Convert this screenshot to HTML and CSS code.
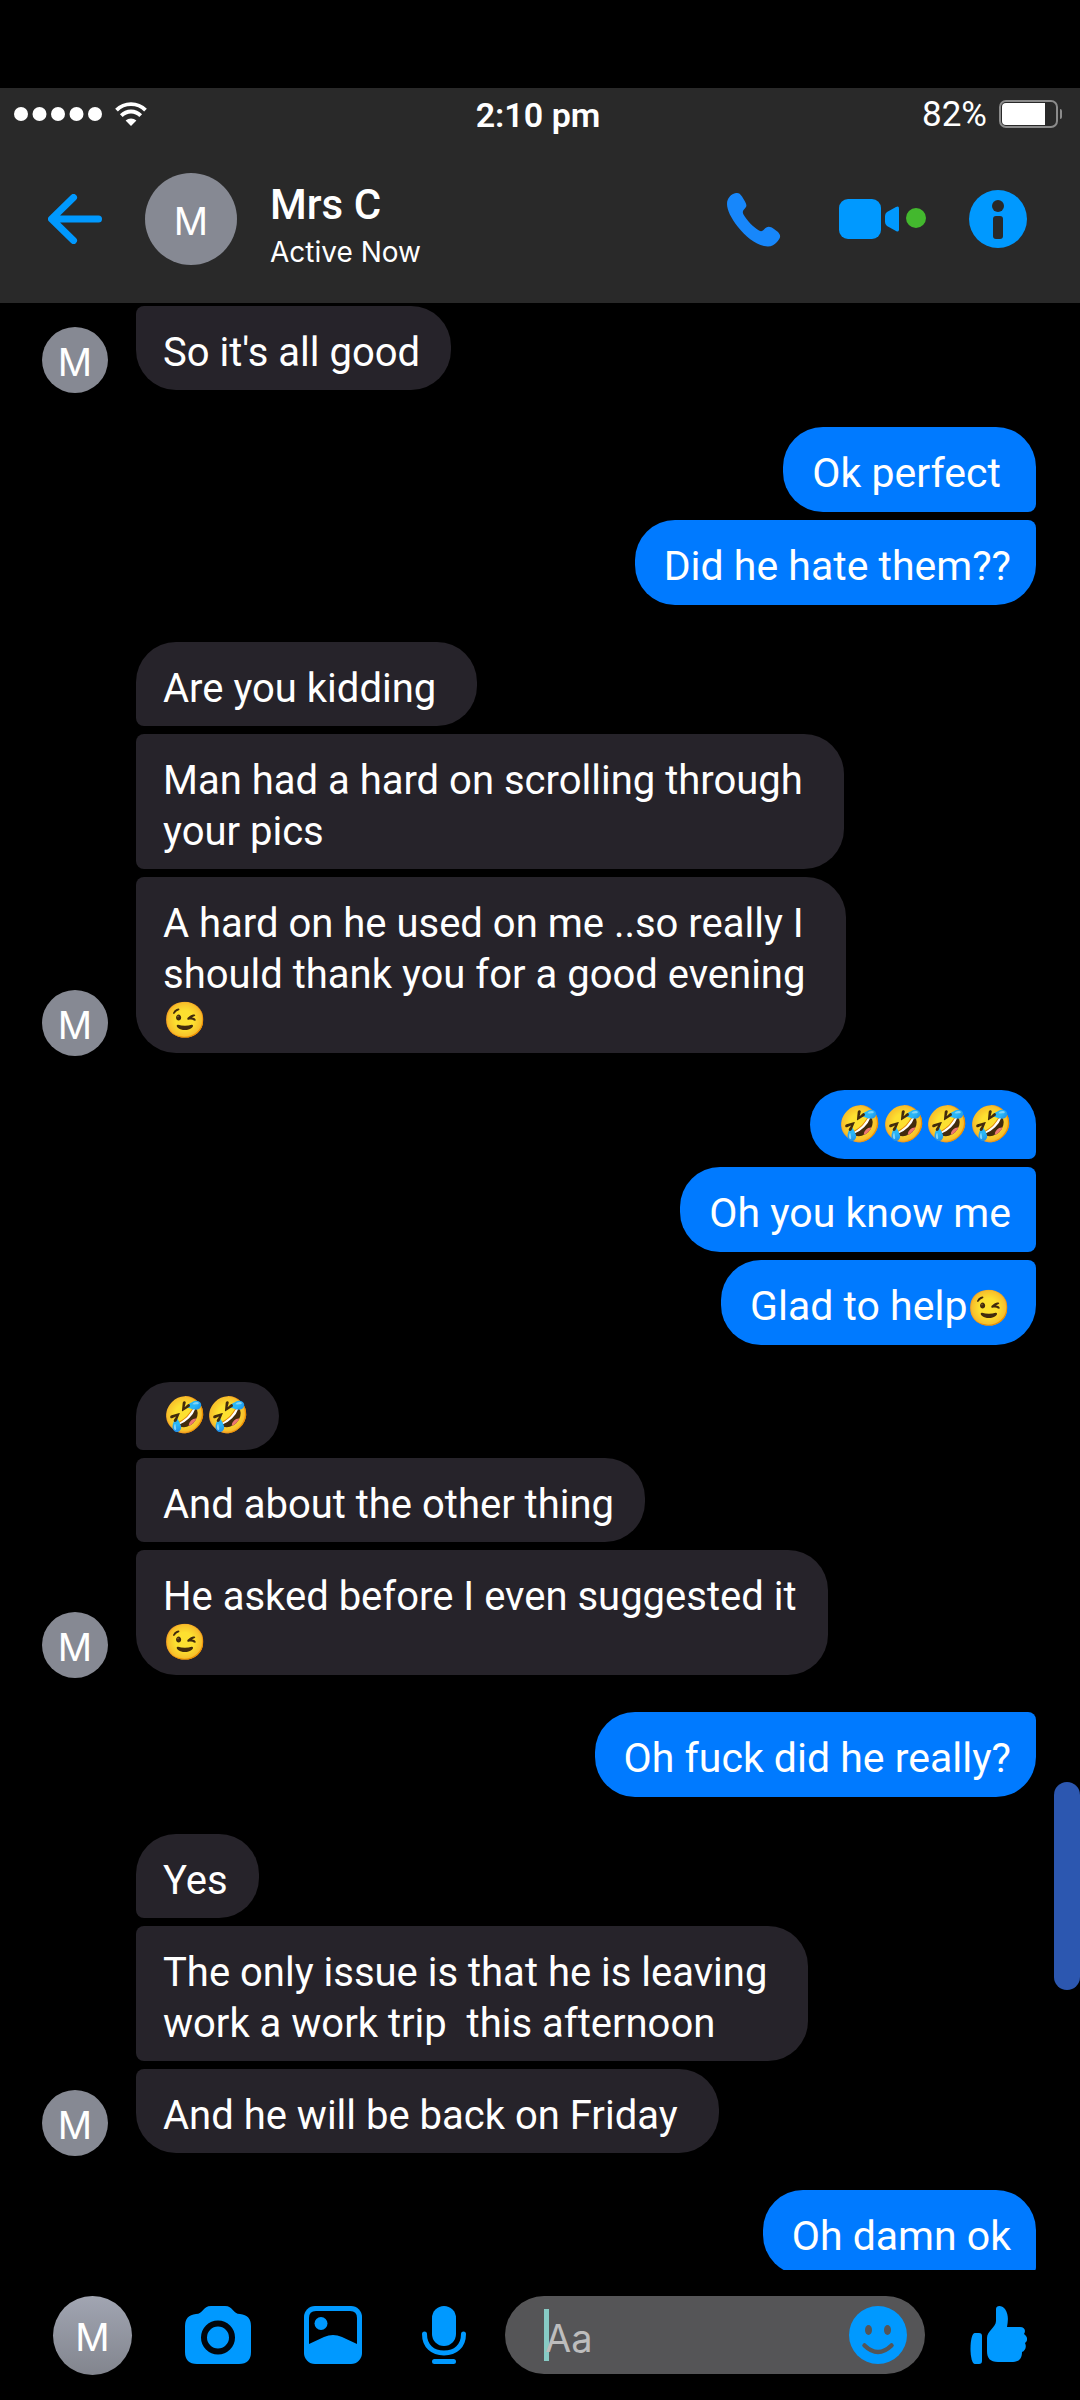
FILE: index.html
```html
<!DOCTYPE html>
<html lang="en">
<head>
<meta charset="utf-8">
<meta name="viewport" content="width=device-width, initial-scale=1">
<title>Mrs C</title>
<link rel="stylesheet" href="styles.css">
</head>
<body>
<div class="app">
  <header class="top">
    <div class="status">
      <div class="status-left">
        <svg width="88" height="14" viewBox="0 0 88 14" fill="#fff" aria-label="Signal"><circle cx="7" cy="7" r="7"/><circle cx="25.500" cy="7" r="7"/><circle cx="44" cy="7" r="7"/><circle cx="62.500" cy="7" r="7"/><circle cx="81" cy="7" r="7"/></svg>
        <svg width="32" height="24" viewBox="0 0 32 24" fill="none" stroke="#fff" stroke-width="3.800" aria-label="Wi-Fi"><path d="M1.500 8.200a20.500 20.500 0 0 1 29 0"/><path d="M6.300 13.600a13.500 13.500 0 0 1 19.400 0"/><path d="M16 24l-5.400-5.400a8 8 0 0 1 10.800 0z" fill="#fff" stroke="none"/></svg>
      </div>
      <time class="clock">2:10 pm</time>
      <div class="status-right">
        <span class="level">82%</span>
        <svg width="63" height="28" viewBox="0 0 63 28" aria-label="Battery"><rect x="1" y="1" width="57" height="26" rx="6" fill="none" stroke="#8b8b8b" stroke-width="2"/><path d="M7 3h39v22H7a4 4 0 0 1-4-4V7a4 4 0 0 1 4-4z" fill="#fff"/><path d="M61 9q2 0 2 2v6q0 2-2 2z" fill="#8b8b8b"/></svg>
      </div>
    </div>
    <div class="contact">
      <button class="icon-btn" aria-label="Back"><svg width="54" height="50" viewBox="0 0 54 50" fill="none" stroke="#0099ff" stroke-width="7" stroke-linecap="round" stroke-linejoin="round"><path d="M25.500 3.500L3.500 25l22 21.500M4.500 25h46"/></svg></button>
      <span class="avatar avatar-lg">M</span>
      <div class="who">
        <h1>Mrs C</h1>
        <p>Active Now</p>
      </div>
      <div class="actions">
        <button class="icon-btn" aria-label="Call"><svg width="69" height="58" viewBox="0 0 69 58"><path d="M9 3C4 4 0 8 0 14c0 6 4 14 11 23s17 17 26 19c6 1.400 10-.5 13-4 4-4.500 4-6.500 1-10l-4-3c-4-3-7-3-10 .5-2 2-3 2-5 1-6-3.500-12-10-15.500-16-1-2-1-3.500.5-5 3-3 3-4 1-8l-3-5C13 3.500 11.500 2.500 9 3z" fill="#1787fb"/></svg></button>
        <button class="icon-btn" aria-label="Video call"><svg width="87" height="58" viewBox="0 0 87 58"><rect y="9" width="42" height="40" rx="9" fill="#0099ff"/><path d="M48 22l9-5q3-1.500 3 1.500v21q0 3-3 1.500l-9-5q-2-1.500-2-4v-6q0-2.500 2-4z" fill="#0099ff"/><circle cx="77" cy="28" r="10" fill="#43b82e"/></svg></button>
        <button class="icon-btn" aria-label="Conversation info"><svg width="58" height="58" viewBox="0 0 58 58"><circle cx="29" cy="29" r="29" fill="#0099ff"/><circle cx="29" cy="16" r="6" fill="#292929"/><rect x="24" y="26" width="10" height="23" rx="3" fill="#292929"/></svg></button>
      </div>
    </div>
  </header>

  <main class="chat">
    <section class="group in">
      <span class="avatar avatar-sm">M</span>
      <div class="stack"><p class="bubble">So it's all good</p></div>
    </section>
    <section class="group out start">
      <div class="stack"><p class="bubble">Ok perfect&nbsp;</p><p class="bubble">Did he hate them??</p></div>
    </section>
    <section class="group in start">
      <span class="avatar avatar-sm">M</span>
      <div class="stack">
        <p class="bubble">Are you kidding&nbsp;</p>
        <p class="bubble">Man had a hard on scrolling through&nbsp;<br>your pics</p>
        <p class="bubble">A hard on he used on me ..so really I<br>should thank you for a good evening&nbsp;<br><span class="emoji emoji-line">😉</span></p>
      </div>
    </section>
    <section class="group out start">
      <div class="stack">
        <p class="bubble emoji-only"><span class="emoji">🤣🤣🤣🤣</span></p>
        <p class="bubble">Oh you know me</p>
        <p class="bubble">Glad to help<span class="emoji">😉</span></p>
      </div>
    </section>
    <section class="group in start">
      <span class="avatar avatar-sm">M</span>
      <div class="stack">
        <p class="bubble emoji-only"><span class="emoji">🤣🤣</span></p>
        <p class="bubble">And about the other thing</p>
        <p class="bubble">He asked before I even suggested it<br><span class="emoji emoji-line">😉</span></p>
      </div>
    </section>
    <section class="group out">
      <div class="stack"><p class="bubble">Oh fuck did he really?</p></div>
    </section>
    <section class="group in start">
      <span class="avatar avatar-sm">M</span>
      <div class="stack">
        <p class="bubble">Yes</p>
        <p class="bubble">The only issue is that he is leaving&nbsp;<br>work a work trip&nbsp; this afternoon</p>
        <p class="bubble">And he will be back on Friday&nbsp;</p>
      </div>
    </section>
    <section class="group out start more">
      <div class="stack"><p class="bubble">Oh damn ok</p></div>
    </section>
    <span class="scroll-thumb"></span>
  </main>

  <footer class="composer">
    <div class="tools">
      <span class="avatar avatar-md">M</span>
      <button class="icon-btn" aria-label="Camera"><svg width="66" height="58" viewBox="0 0 66 58"><path d="M26 0h14c8 0 8 8 15 8q11 1 11 12v26q0 12-12 12H12Q0 58 0 46V20Q0 9 11 8c7 0 7-8 15-8z" fill="#0099ff"/><circle cx="33" cy="31.500" r="14" fill="#0099ff" stroke="#02060c" stroke-width="6"/></svg></button>
      <button class="icon-btn" aria-label="Gallery"><svg width="58" height="58" viewBox="0 0 58 58"><rect width="58" height="58" rx="11" fill="#0099ff"/><path d="M5 38V12q0-7 7-7h34q7 0 7 7v26l-15-7q-9-4-18 0z" fill="#000"/><circle cx="17" cy="17.500" r="6.500" fill="#0099ff"/></svg></button>
      <button class="icon-btn" aria-label="Voice message"><svg width="58" height="58" viewBox="0 0 58 58" fill="none" stroke="#0099ff" stroke-width="5" stroke-linecap="round"><rect x="17" y="0" width="24" height="40" rx="12" fill="#0099ff" stroke="none"/><path d="M9.500 28c0 12 8 19 19.500 19s19.500-7 19.500-19M19.500 55.500h19"/></svg></button>
    </div>
    <div class="field">
      <span class="caret"></span>
      <input type="text" placeholder="Aa" aria-label="Message">
      <button class="icon-btn" aria-label="Emoji"><svg width="58" height="58" viewBox="0 0 58 58"><circle cx="29" cy="29" r="29" fill="#0099ff"/><ellipse cx="19.500" cy="24" rx="3.500" ry="5" fill="#555557"/><ellipse cx="38.500" cy="24" rx="3.500" ry="5" fill="#555557"/><path d="M15.500 39.500q13.500 13 27 0" fill="none" stroke="#555557" stroke-width="4.500" stroke-linecap="round"/></svg></button>
    </div>
    <button class="icon-btn" aria-label="Like"><svg width="57" height="58" viewBox="0 0 57 58" fill="#0099ff"><path d="M5 27h4q3 0 3 3v25q0 3-3 3H5c-6 0-6-31 0-31z"/><path d="M26 3c0-4 6-4 9 0 4 6 3 12 2 18h13c5 0 6 4 4 7 4 3 4 7 1 9 2 4 0 8-3 9 0 8-4 10-11 10H28c-8 0-11-4-11-11V32c0-7 9-11 9-17z"/></svg></button>
  </footer>
</div>
</body>
</html>
```
FILE: styles.css
```css
* { box-sizing: border-box; }

body {
  margin: 0;
  background: #000;
  color: #fff;
  font-family: Roboto, "Liberation Sans", sans-serif;
}

h1, p { margin: 0; }
svg { display: block; flex: none; }

.app {
  display: flex;
  flex-direction: column;
  height: 100vh;
  padding-top: 88px;
}

.icon-btn {
  flex: none;
  padding: 0;
  border: 0;
  background: none;
}

.avatar {
  flex: none;
  display: flex;
  align-items: center;
  justify-content: center;
  border-radius: 50%;
  background: #868993;
  font-family: Inter, "Liberation Sans", sans-serif;
  font-size: 38px;
  padding-top: 3px;
}
.avatar-sm { width: 66px; height: 66px; margin-bottom: -3px; }
.avatar-md { width: 79px; height: 79px; background: linear-gradient(#a1a5b2, #82858e); }
.avatar-lg { width: 92px; height: 92px; }

/* Header */
.top {
  flex: none;
  background: #292929;
  padding-bottom: 38px;
}
.status {
  display: grid;
  grid-template-columns: 1fr auto 1fr;
  align-items: center;
  height: 50px;
  padding: 0 18px 0 14px;
  font-size: 35px;
  line-height: 50px;
}
.status-left, .status-right { display: flex; align-items: center; gap: 13px; }
.status-right { justify-content: flex-end; gap: 12px; }
.clock { font-size: 34px; font-weight: 600; }
.clock, .level { padding-top: 2px; }
.contact {
  display: flex;
  align-items: center;
  height: 127px;
  padding: 35px 53px 0 48px;
}
.contact .avatar { margin: 0 33px 0 43px; }
.who { flex: 1; padding-top: 17px; }
.who h1 { font-size: 42px; line-height: 50px; font-weight: 500; }
.who p { font-family: Inter, "Liberation Sans", sans-serif; font-size: 28px; line-height: 45px; }
.actions { display: flex; gap: 43px; }

/* Conversation */
.chat {
  position: relative;
  flex: 1;
  min-height: 0;
  overflow: hidden;
  display: flex;
  flex-direction: column;
  gap: 37px;
  padding: 3px 44px 0 42px;
}
.group { flex: none; display: flex; align-items: flex-end; gap: 28px; }
.group.out { justify-content: flex-end; }
.stack { display: flex; flex-direction: column; align-items: flex-start; gap: 8px; }
.out .stack { align-items: flex-end; }

.bubble {
  padding: 21px 31px 12px 27px;
  border-radius: 8px 40px 40px 8px;
  background: #26232a;
  font-size: 40px;
  line-height: 51px;
  white-space: nowrap;
}
.in .bubble:last-child { border-bottom-left-radius: 40px; }
.in.start .bubble:first-child { border-top-left-radius: 40px; }

.out .bubble {
  padding: 21px 25px 13px 29px;
  border-radius: 40px 8px 8px 40px;
  background: #007aff;
  font-size: 41px;
}
.out .bubble:last-child { border-bottom-right-radius: 40px; }
.out.start .bubble:first-child { border-top-right-radius: 40px; }
.out.more .bubble:last-child { border-bottom-right-radius: 8px; }

.emoji {
  font-family: "Noto Color Emoji", sans-serif;
  font-size: 35px;
  line-height: 36px;
}
.emoji-line { display: block; line-height: 41px; }
.in .bubble.emoji-only { padding: 16px 29px 16px 27px; }
.out .bubble.emoji-only { padding: 17px 23px 16px 29px; }
.emoji-only .emoji { display: block; }

.scroll-thumb {
  position: absolute;
  right: 0;
  bottom: 280px;
  width: 26px;
  height: 208px;
  border-radius: 13px;
  background: #2c57b0;
}

/* Composer */
.composer {
  flex: none;
  display: flex;
  align-items: center;
  height: 130px;
  padding: 0 53px;
}
.tools { display: flex; align-items: center; gap: 53px; }
.field {
  position: relative;
  flex: 1;
  min-width: 0;
  display: flex;
  align-items: center;
  height: 78px;
  margin: 0 45px 0 32px;
  padding: 0 18px 0 40px;
  border-radius: 39px;
  background: #555557;
}
.field input {
  position: relative;
  flex: 1;
  min-width: 0;
  height: 78px;
  padding: 5px 0 0;
  border: 0;
  outline: 0;
  background: none;
  color: #fff;
  font: 38px Inter, "Liberation Sans", sans-serif;
}
.field input::placeholder { color: #bdbdbd; opacity: 1; }
.caret {
  position: absolute;
  left: 39px;
  top: 13px;
  width: 5px;
  height: 52px;
  background: #87cbc5;
}
```
